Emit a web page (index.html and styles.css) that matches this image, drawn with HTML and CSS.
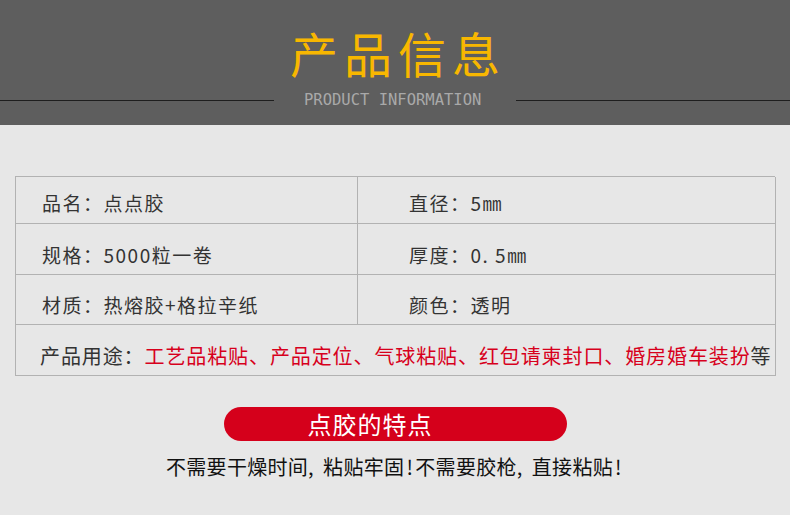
FILE: index.html
```html
<!DOCTYPE html>
<html lang="zh">
<head>
<meta charset="utf-8">
<title>产品信息</title>
<link rel="stylesheet" href="styles.css">
</head>
<body>
<header class="hero">
  <h1 class="hero-title">产品信息</h1>
  <div class="hero-sub">
    <span class="rule"></span>
    <span class="sub-text">PRODUCT INFORMATION</span>
    <span class="rule"></span>
  </div>
</header>
<main class="content">
  <div class="spec">
    <div class="cell c-left r1">品名：点点胶</div>
    <div class="cell c-right r1">直径：5㎜</div>
    <div class="cell c-left r2">规格：5000粒一卷</div>
    <div class="cell c-right r2">厚度：0. 5㎜</div>
    <div class="cell c-left r3">材质：热熔胶+格拉辛纸</div>
    <div class="cell c-right r3">颜色：透明</div>
    <div class="cell c-full r4">产品用途：<span class="red">工艺品粘贴、产品定位、气球粘贴、红包请柬封口、婚房婚车装扮</span>等</div>
  </div>
  <div class="pill"><span class="pill-text">点胶的特点</span></div>
  <p class="feature">不需要干燥时间<span class="p-comma">,</span>粘贴牢固<span class="p-bang">!</span>不需要胶枪<span class="p-comma">,</span>直接粘贴<span class="p-bang">!</span></p>
</main>
</body>
</html>
```

FILE: styles.css
```css
* { box-sizing: border-box; }
html, body { margin: 0; padding: 0; }
body {
  width: 790px;
  height: 515px;
  overflow: hidden;
  background: #e7e7e7;
  font-family: "Noto Sans CJK SC", "Noto Sans", sans-serif;
}
.hero {
  height: 125px;
  background: #5e5e5e;
  display: flex;
  flex-direction: column;
  align-items: center;
  padding-top: 24px;
}
.hero-title {
  margin: 0;
  font-weight: 400;
  font-size: 48px;
  line-height: 57px;
  letter-spacing: 6px;
  padding-left: 6px;
  color: #f8b700;
}
.hero-sub {
  width: 100%;
  display: flex;
  align-items: center;
  margin-top: 11px;
  height: 16px;
}
.rule {
  flex: 1;
  height: 1px;
  background: #1e1e1e;
}
.sub-text {
  font-family: "DejaVu Sans Mono", monospace;
  font-size: 15.5px;
  line-height: 16px;
  color: #a9a9a9;
  margin: 0 34px 0 30px;
  width: 178px;
  white-space: nowrap;
}
.content {
  padding: 51px 15px 0;
  display: flex;
  flex-direction: column;
  align-items: center;
}
.spec {
  width: 760px;
  display: grid;
  grid-template-columns: 342px 418px;
  grid-template-rows: 47px 51px 50px 51px;
  border-top: 1px solid #b2b2b2;
  border-left: 1px solid #b2b2b2;
}
.cell {
  display: flex;
  align-items: center;
  border-right: 1px solid #b2b2b2;
  border-bottom: 1px solid #b2b2b2;
  color: #333;
  font-size: 19px;
  letter-spacing: 1.5px;
  white-space: nowrap;
}
.r1 { padding-top: 4px; }
.r2, .r3, .r4 { padding-top: 10px; }
.c-left { padding-left: 26px; }
.c-right { padding-left: 51px; }
.c-full {
  grid-column: 1 / 3;
  padding-left: 24px;
  font-size: 20px;
  letter-spacing: 0.9px;
}
.red { color: #d7001c; }
.pill {
  margin-top: 31px;
  width: 343px;
  height: 34px;
  border-radius: 17px;
  background: #d5001b;
  display: flex;
  align-items: center;
  padding-left: 84px;
}
.pill-text {
  color: #fff;
  font-size: 24px;
  line-height: 34px;
  letter-spacing: 1px;
}
.feature {
  margin: 9px 0 0;
  font-size: 20px;
  line-height: 34px;
  color: #111;
  letter-spacing: 0.3px;
  white-space: nowrap;
}
.p-comma {
  display: inline-block;
  width: 15px;
}
.p-bang {
  display: inline-block;
  width: 11px;
  text-align: center;
}
```
